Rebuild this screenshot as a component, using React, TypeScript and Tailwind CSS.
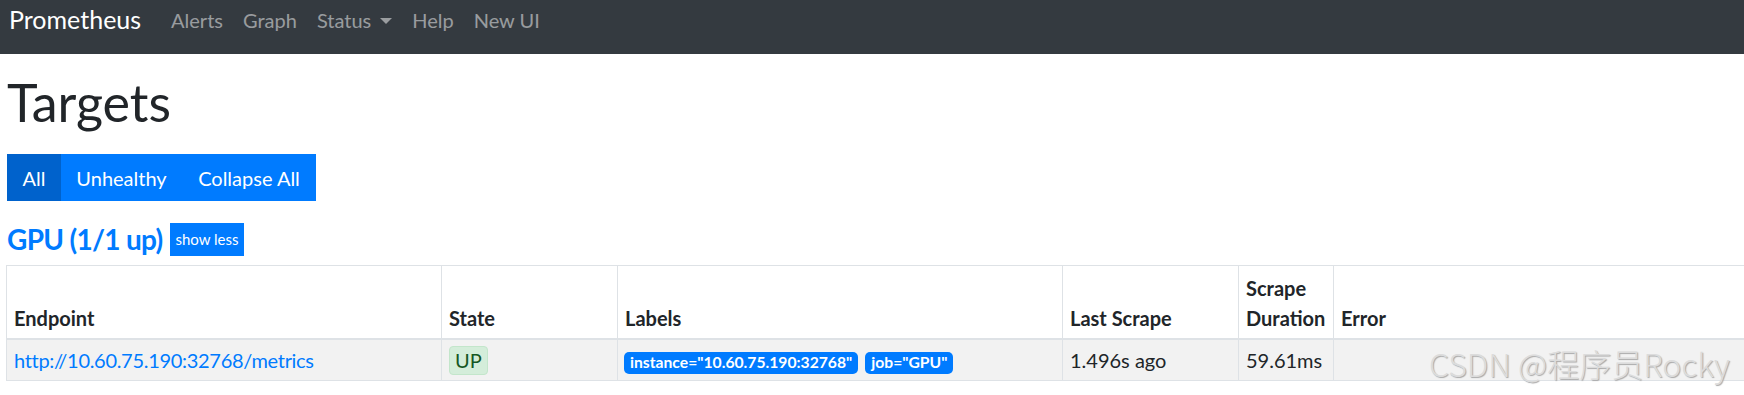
import React from "react";

const FONT = { fontFamily: 'Lato, "Open Sans", "Liberation Sans", sans-serif' };

export default function App() {
  return (
    <div className="relative w-[1744px] h-[395px] overflow-hidden bg-white text-[#212529]" style={FONT}>
      {/* Navbar */}
      <nav className="h-[54px] bg-[#343a40] flex items-start pl-[9px]">
        <div className="text-[25px] leading-[25px] pt-[7px] text-white mr-[20px]">Prometheus</div>
        <div className="flex items-start text-[20px] leading-[20px] pt-[10px] text-white/50">
          <span className="px-[10px]">Alerts</span>
          <span className="px-[10px]">Graph</span>
          <span className="px-[10px] flex items-center">
            Status
            <span className="ml-[9px] mt-[1px] w-0 h-0 border-t-[6px] border-t-current border-x-[6px] border-x-transparent" />
          </span>
          <span className="px-[10px]">Help</span>
          <span className="px-[10px]">New UI</span>
        </div>
      </nav>

      <div className="pl-[7px]">
        <h1 className="text-[52px] leading-[52px] font-normal mt-[22px]">Targets</h1>

        <div className="flex mt-[26px] h-[47px] text-[20px] leading-[30px] text-white w-fit">
          <div className="bg-[#0062cc] w-[54px] flex items-center justify-center">All</div>
          <div className="bg-[#007bff] w-[121px] flex items-center justify-center">Unhealthy</div>
          <div className="bg-[#007bff] w-[134px] flex items-center justify-center">Collapse All</div>
        </div>

        <div className="flex items-center mt-[20px] h-[36px]">
          <span className="text-[28px] leading-[36px] font-bold tracking-[-0.7px] text-[#007bff]">GPU (1/1 up)</span>
          <span className="ml-[8px] h-[33px] px-[5px] flex items-center bg-[#007bff] text-white text-[15px]">show less</span>
        </div>
      </div>

      <table className="mt-[8px] ml-[6px] w-[1738px] table-fixed border-collapse text-[20px] leading-[30px]">
        <colgroup>
          <col className="w-[435px]" />
          <col className="w-[176px]" />
          <col className="w-[445px]" />
          <col className="w-[176px]" />
          <col className="w-[95px]" />
          <col />
        </colgroup>
        <thead>
          <tr className="h-[73px]">
            {["Endpoint", "State", "Labels", "Last Scrape", "Scrape Duration", "Error"].map((h, i) => (
              <th
                key={h}
                className={`text-left align-bottom font-bold px-[7px] pt-[6px] pb-[5px] border-t border-t-[#dee2e6] border-b-2 border-b-[#dee2e6] border-l border-l-[#dee2e6] ${i === 5 ? "border-r-0" : "border-r border-r-[#dee2e6]"}`}
              >
                {h}
              </th>
            ))}
          </tr>
        </thead>
        <tbody>
          <tr className="h-[42px] bg-[#f2f2f2]">
            <td className="px-[7px] align-middle border border-[#dee2e6] text-[#007bff] whitespace-nowrap tracking-[-0.3px]">
              http://10.60.75.190:32768/metrics
            </td>
            <td className="px-[7px] align-middle border border-[#dee2e6]">
              <span className="inline-block px-[5px] leading-[27px] bg-[#d4edda] border border-[#c3e6cb] text-[#155724] rounded-[4px]">
                UP
              </span>
            </td>
            <td className="px-[6px] align-middle border border-[#dee2e6] whitespace-nowrap">
              <span className="inline-block align-middle bg-[#007bff] text-white font-bold text-[15.7px] leading-[15px] px-[6px] py-[3.5px] rounded-[5px]">
                instance="10.60.75.190:32768"
              </span>
              <span className="inline-block align-middle ml-[7px] bg-[#007bff] text-white font-bold text-[15.7px] leading-[15px] px-[6px] py-[3.5px] rounded-[5px]">
                job="GPU"
              </span>
            </td>
            <td className="px-[7px] align-middle border border-[#dee2e6]">1.496s ago</td>
            <td className="px-[7px] align-middle border border-[#dee2e6]">59.61ms</td>
            <td className="px-[7px] align-middle border border-[#dee2e6] border-r-0"></td>
          </tr>
        </tbody>
      </table>

      {/* Watermark */}
      <div
        className="absolute left-[1429px] top-[344px] text-[32px] leading-[38px] font-light text-[#dcdcdc] whitespace-nowrap pointer-events-none"
        style={{ fontFamily: '"Noto Sans CJK SC", "Liberation Sans", sans-serif', textShadow: "1px 1px 1px #a8a8a8" }}
      >
        CSDN @程序员Rocky
      </div>
    </div>
  );
}
